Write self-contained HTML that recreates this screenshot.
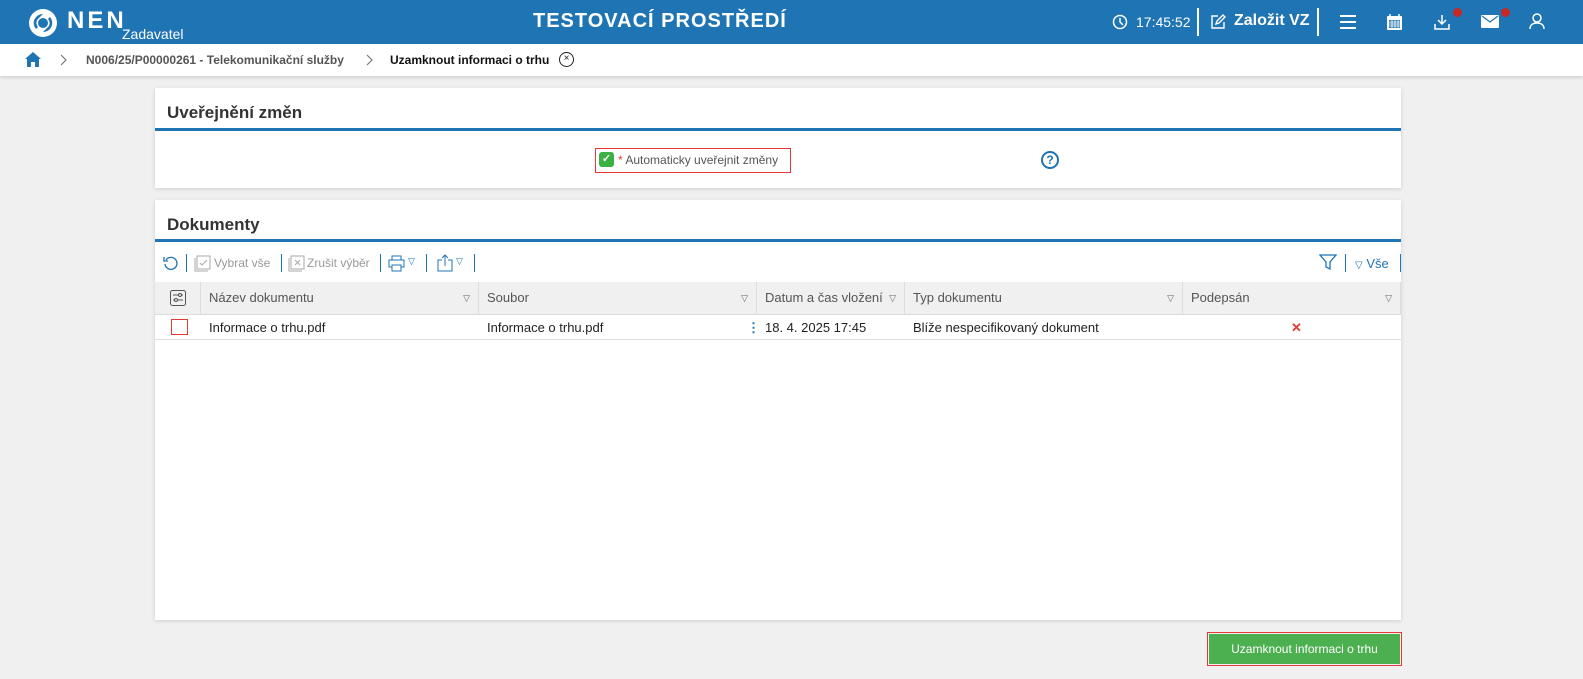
<!DOCTYPE html>
<html><head><meta charset="utf-8"><style>
*{box-sizing:border-box;margin:0;padding:0}
body{width:1583px;height:679px;background:#f0f0f0;font-family:"Liberation Sans",sans-serif;position:relative;overflow:hidden;font-size:13px;color:#222}
.hdr{position:absolute;left:0;top:0;width:1583px;height:44px;background:#1f74b4;color:#fff}
.ab{position:absolute;white-space:nowrap}
.bc{position:absolute;top:44px;left:0;width:1583px;height:32px;background:#fff;box-shadow:0 2px 3px rgba(0,0,0,.12)}
.panel{position:absolute;left:155px;width:1246px;background:#fff;box-shadow:0 1px 4px rgba(0,0,0,.15)}
.title{position:absolute;left:12px;font-size:17px;font-weight:bold;color:#333}
.line{position:absolute;left:0;width:100%;height:3px;background:#1f74b4}
.th{position:absolute;top:82px;height:33px;background:#f0f0f0;border-right:1px solid #ddd;border-bottom:1px solid #ddd;color:#555;font-size:13px;line-height:32px;padding-left:8px}
.tri{position:absolute;right:8px;top:0;font-size:9px;color:#666}
.td{position:absolute;top:115px;height:25px;line-height:25px;font-size:13px;padding-left:8px;color:#222}
.vs{position:absolute;top:54px;width:1px;height:18px;background:#1f74b4}
</style></head><body>
<div class="hdr">
 <svg class="ab" style="left:27px;top:7px" width="32" height="32" viewBox="0 0 32 32"><circle cx="16" cy="16" r="14" fill="#fff"/><path d="M9 22 A9 9 0 0 1 16 7 L12 11 A6 6 0 0 0 11 20Z M23 10 A9 9 0 0 1 16 25 L20 21 A6 6 0 0 0 21 12Z" fill="#1f74b4"/><circle cx="16" cy="16" r="5" fill="#1f74b4"/></svg>
 <div class="ab" style="left:67px;top:7px;font-size:24px;font-weight:bold;letter-spacing:3px">NEN</div>
 <div class="ab" style="left:122px;top:26px;font-size:14px">Zadavatel</div>
 <div class="ab" style="left:533px;top:10px;font-size:20px;font-weight:bold;letter-spacing:1px">TESTOVACÍ PROSTŘEDÍ</div>
 <svg class="ab" style="left:1112px;top:14px" width="16" height="16" viewBox="0 0 16 16"><circle cx="8" cy="8" r="6.5" fill="none" stroke="#fff" stroke-width="1.5"/><path d="M8 4v4l3 3" stroke="#fff" stroke-width="1.5" fill="none"/></svg>
 <div class="ab" style="left:1136px;top:14px;font-size:14px">17:45:52</div>
 <div class="ab" style="left:1197px;top:8px;width:2px;height:28px;background:#fff"></div>
 <svg class="ab" style="left:1210px;top:13px" width="17" height="17" viewBox="0 0 17 17"><path d="M8 3H2v12h12V9" fill="none" stroke="#fff" stroke-width="1.4"/><path d="M6 11l1-3 6-6 2 2-6 6z" fill="none" stroke="#fff" stroke-width="1.4"/></svg>
 <div class="ab" style="left:1234px;top:12px;font-size:16px;font-weight:bold">Založit VZ</div>
 <div class="ab" style="left:1317px;top:8px;width:2px;height:28px;background:#fff"></div>
 <div class="ab" style="left:1340px;top:15px;width:16px;height:2px;background:#fff;box-shadow:0 6px 0 #fff,0 12px 0 #fff"></div>
 <svg class="ab" style="left:1386px;top:13px" width="17" height="18" viewBox="0 0 17 18"><rect x="1" y="3" width="15" height="14" rx="1" fill="#fff"/><rect x="3" y="7" width="11" height="8" fill="#1f74b4"/><path d="M3 9h11M3 11h11M3 13h11M6 7v8M9 7v8M12 7v8" stroke="#fff" stroke-width=".8"/><path d="M4 1v3M13 1v3" stroke="#fff" stroke-width="1.5"/></svg>
 <svg class="ab" style="left:1433px;top:13px" width="18" height="18" viewBox="0 0 18 18"><path d="M9 2v9M5 7l4 4 4-4" stroke="#fff" stroke-width="1.5" fill="none"/><path d="M2 11v5h14v-5" stroke="#fff" stroke-width="1.5" fill="none"/></svg>
 <div class="ab" style="left:1453px;top:8px;width:9px;height:9px;border-radius:50%;background:#c62828"></div>
 <svg class="ab" style="left:1481px;top:15px" width="18" height="13" viewBox="0 0 18 13"><rect width="18" height="13" rx="1" fill="#fff"/><path d="M1 1l8 6 8-6" stroke="#1f74b4" stroke-width="1.2" fill="none"/></svg>
 <div class="ab" style="left:1501px;top:8px;width:9px;height:9px;border-radius:50%;background:#c62828"></div>
 <svg class="ab" style="left:1528px;top:12px" width="18" height="18" viewBox="0 0 18 18"><circle cx="9" cy="6" r="4" fill="none" stroke="#fff" stroke-width="1.5"/><path d="M2 17c0-4 3-6 7-6s7 2 7 6" fill="none" stroke="#fff" stroke-width="1.5"/></svg>
</div>
<div class="bc">
 <svg class="ab" style="left:24px;top:7px" width="18" height="17" viewBox="0 0 18 17"><path d="M9 1L1 8h2v8h4v-5h4v5h4V8h2z" fill="#1f74b4"/></svg>
 <svg class="ab" style="left:60px;top:10px" width="8" height="12" viewBox="0 0 8 12"><path d="M1 1l5 5-5 5" stroke="#777" stroke-width="1.2" fill="none"/></svg>
 <div class="ab" style="left:86px;top:9px;color:#555;font-weight:bold;font-size:12px">N006/25/P00000261 - Telekomunikační služby</div>
 <svg class="ab" style="left:366px;top:10px" width="8" height="12" viewBox="0 0 8 12"><path d="M1 1l5 5-5 5" stroke="#777" stroke-width="1.2" fill="none"/></svg>
 <div class="ab" style="left:390px;top:9px;color:#111;font-weight:bold;font-size:12px">Uzamknout informaci o trhu</div>
 <div class="ab" style="left:559px;top:8px;width:15px;height:15px;border:1.3px solid #222;border-radius:50%;font-size:10px;line-height:12px;text-align:center">×</div>
</div>
<div class="panel" style="top:88px;height:100px">
 <div class="title" style="top:15px">Uveřejnění změn</div>
 <div class="line" style="top:40px"></div>
 <div class="ab" style="left:440px;top:60px;width:196px;height:25px;border:1px solid #e53935"></div>
 <div class="ab" style="left:444px;top:64px;width:15px;height:15px;background:#3cb043;border-radius:3px;color:#fff;font-size:11px;line-height:15px;text-align:center;font-weight:bold">✓</div>
 <div class="ab" style="left:463px;top:65px;font-size:12px;color:#555"><span style="color:#e53935">*</span> Automaticky uveřejnit změny</div>
 <div class="ab" style="left:886px;top:63px;width:18px;height:18px;border:2px solid #1f74b4;border-radius:50%;color:#1f74b4;font-weight:bold;font-size:12px;line-height:14px;text-align:center">?</div>
</div>
<div class="panel" style="top:200px;height:420px">
 <div class="title" style="top:15px">Dokumenty</div>
 <div class="line" style="top:39px"></div>
 <svg class="ab" style="left:8px;top:55px" width="16" height="16" viewBox="0 0 16 16"><path d="M3 5A6 6 0 1 1 2 9" fill="none" stroke="#1f74b4" stroke-width="1.3"/><path d="M1 2v4h4" fill="none" stroke="#1f74b4" stroke-width="1.3"/></svg>
 <div class="vs" style="left:31px"></div>
 <svg class="ab" style="left:39px;top:55px" width="17" height="17" viewBox="0 0 17 17"><rect x="3" y="1" width="13" height="13" fill="none" stroke="#aaa"/><path d="M1 3v13h13" fill="none" stroke="#aaa"/><path d="M6 8l2 2 5-5" fill="none" stroke="#aaa"/></svg>
 <div class="ab" style="left:59px;top:56px;color:#999;font-size:12px">Vybrat vše</div>
 <div class="vs" style="left:126px"></div>
 <svg class="ab" style="left:133px;top:55px" width="17" height="17" viewBox="0 0 17 17"><rect x="3" y="1" width="13" height="13" fill="none" stroke="#aaa"/><path d="M1 3v13h13" fill="none" stroke="#aaa"/><path d="M7 5l5 5M12 5l-5 5" stroke="#aaa"/></svg>
 <div class="ab" style="left:152px;top:56px;color:#999;font-size:12px">Zrušit výběr</div>
 <div class="vs" style="left:225px"></div>
 <svg class="ab" style="left:233px;top:55px" width="17" height="17" viewBox="0 0 17 17"><rect x="4" y="1" width="9" height="4" fill="none" stroke="#1f74b4"/><rect x="1" y="5" width="15" height="7" fill="none" stroke="#1f74b4"/><rect x="4" y="10" width="9" height="6" fill="#fff" stroke="#1f74b4"/></svg>
 <div class="ab" style="left:253px;top:56px;color:#1f74b4;font-size:9px">▽</div>
 <div class="vs" style="left:271px"></div>
 <svg class="ab" style="left:282px;top:54px" width="16" height="18" viewBox="0 0 16 18"><path d="M5 6H1v11h14V6h-4" fill="none" stroke="#1f74b4"/><path d="M8 12V1M5 4l3-3 3 3" fill="none" stroke="#1f74b4"/></svg>
 <div class="ab" style="left:301px;top:56px;color:#1f74b4;font-size:9px">▽</div>
 <div class="vs" style="left:319px"></div>
 <svg class="ab" style="left:1164px;top:53px" width="18" height="18" viewBox="0 0 18 18"><path d="M1 2h16l-6 7v7l-4-2V9z" fill="none" stroke="#1f74b4" stroke-width="1.3"/></svg>
 <div class="vs" style="left:1190px"></div>
 <div class="ab" style="left:1200px;top:56px;color:#1f74b4;font-size:13px"><span style="font-size:10px">▽</span> Vše</div>
 <div class="vs" style="left:1245px"></div>
 <div class="th" style="left:0;width:46px"><svg class="ab" style="left:15px;top:8px" width="16" height="16" viewBox="0 0 16 16"><rect x=".5" y=".5" width="15" height="15" rx="2" fill="none" stroke="#555"/><path d="M3 5h10M3 10h10" stroke="#555"/><circle cx="10" cy="5" r="1.5" fill="#f0f0f0" stroke="#555"/><circle cx="6" cy="10" r="1.5" fill="#f0f0f0" stroke="#555"/></svg></div>
 <div class="th" style="left:46px;width:278px">Název dokumentu<span class="tri">▽</span></div>
 <div class="th" style="left:324px;width:278px">Soubor<span class="tri">▽</span></div>
 <div class="th" style="left:602px;width:148px">Datum a čas vložení<span class="tri">▽</span></div>
 <div class="th" style="left:750px;width:278px">Typ dokumentu<span class="tri">▽</span></div>
 <div class="th" style="left:1028px;width:218px">Podepsán<span class="tri">▽</span></div>
 <div class="ab" style="left:0;top:139px;width:1246px;height:1px;background:#ddd"></div>
 <div class="ab" style="left:16px;top:119px;width:17px;height:16px;border:1px solid #e53935"></div>
 <div class="td" style="left:46px">Informace o trhu.pdf</div>
 <div class="td" style="left:324px">Informace o trhu.pdf</div>
 <div class="td" style="left:584px;color:#1f74b4;font-weight:bold">⋮</div>
 <div class="td" style="left:602px">18. 4. 2025 17:45</div>
 <div class="td" style="left:750px">Blíže nespecifikovaný dokument</div>
 <div class="td" style="left:1128px;color:#e53935;font-weight:bold">✕</div>
</div>
<div class="ab" style="left:1207px;top:632px;width:195px;height:34px;border:1px solid #e53935;padding:1px"><div style="background:#4caf50;height:100%;color:#fff;font-size:12px;text-align:center;line-height:30px">Uzamknout informaci o trhu</div></div>
</body></html>
